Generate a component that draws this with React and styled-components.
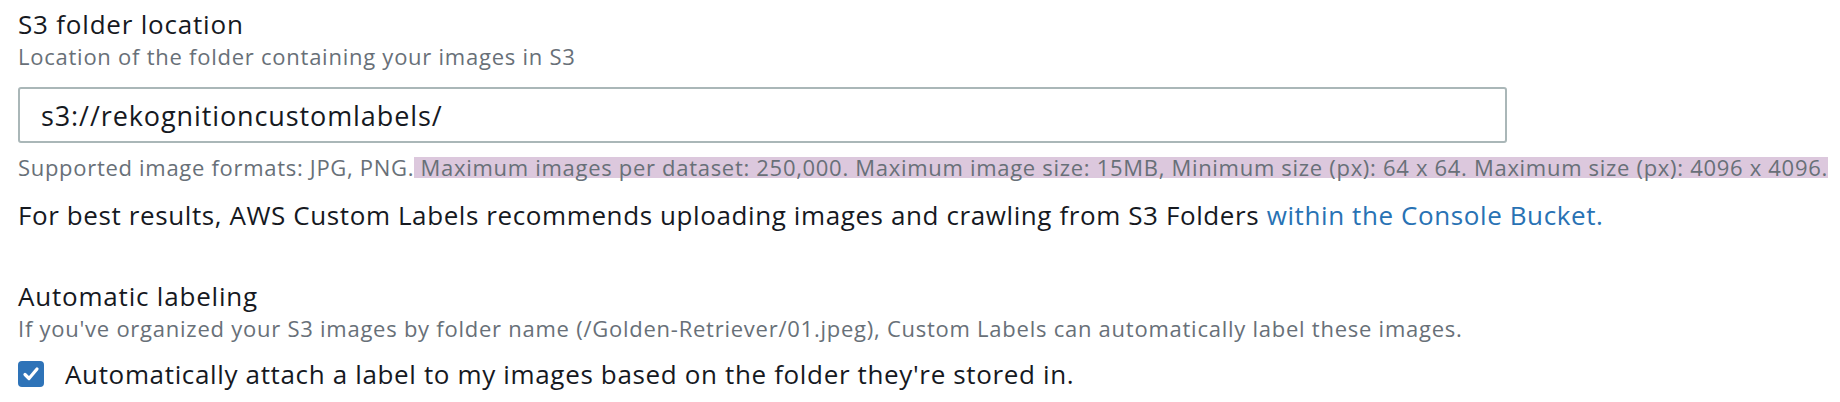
import React from 'react'
import styled, { createGlobalStyle } from 'styled-components'

const GlobalStyle = createGlobalStyle`
  body {
    margin: 0;
    background: #ffffff;
    font-family: "Open Sans", "Liberation Sans", sans-serif;
    color: #16191f;
  }
`

const Page = styled.div`
  padding: 7px 0 0 18px;
  width: 1840px;
  box-sizing: border-box;
`

const Field = styled.section`
  display: flex;
  flex-direction: column;
  margin-bottom: ${p => p.gap || 0}px;
`

const Label = styled.div`
  font-size: 26px;
  line-height: 34px;
  letter-spacing: 0.8px;
  color: #16191f;
`

const Description = styled.div`
  font-size: 22px;
  line-height: 30px;
  letter-spacing: 0.75px;
  color: #687078;
`

const Input = styled.input`
  margin-top: 16px;
  width: 1489px;
  height: 56px;
  box-sizing: border-box;
  border: 2px solid #aab7b8;
  border-radius: 3px;
  padding: 0 21px;
  font-family: inherit;
  font-size: 27px;
  letter-spacing: 0.9px;
  color: #16191f;
  outline: none;
  background: #fff;
`

const Constraint = styled.div`
  margin-top: 14px;
  font-size: 22px;
  line-height: 21px;
  letter-spacing: 0.7px;
  color: #687078;
  white-space: nowrap;
`

const Highlight = styled.span`
  display: inline-block;
  height: 21px;
  line-height: 21px;
  background: #dcc8dd;
`

const Note = styled.p`
  margin: 21px 0 0;
  font-size: 26px;
  line-height: 32px;
  letter-spacing: 0.6px;
  color: #16191f;
`

const Link = styled.a`
  color: #2872b4;
  text-decoration: none;
`

const CheckRow = styled.label`
  display: flex;
  align-items: center;
  gap: 21px;
  margin-top: 15px;
  font-size: 26px;
  line-height: 32px;
  letter-spacing: 0.65px;
  color: #16191f;
`

const Box = styled.span`
  width: 26px;
  height: 26px;
  border-radius: 4px;
  background: #2e73b8;
  display: flex;
  align-items: center;
  justify-content: center;
  flex-shrink: 0;
`

export default function App() {
  return (
    <>
      <GlobalStyle />
      <Page>
        <Field gap={48}>
          <Label>S3 folder location</Label>
          <Description>Location of the folder containing your images in S3</Description>
          <Input defaultValue="s3://rekognitioncustomlabels/" />
          <Constraint>
            Supported image formats: JPG, PNG.
            <Highlight>&nbsp;Maximum images per dataset: 250,000. Maximum image size: 15MB, Minimum size (px): 64 x 64. Maximum size (px): 4096 x 4096.</Highlight>
          </Constraint>
          <Note>
            For best results, AWS Custom Labels recommends uploading images and crawling from S3 Folders{' '}
            <Link href="#">within the Console Bucket.</Link>
          </Note>
        </Field>

        <Field>
          <Label>Automatic labeling</Label>
          <Description>If you've organized your S3 images by folder name (/Golden-Retriever/01.jpeg), Custom Labels can automatically label these images.</Description>
          <CheckRow>
            <Box>
              <svg width="20" height="20" viewBox="0 0 20 20">
                <path d="M4 10.5 L8 14.5 L16 5" fill="none" stroke="#fff" strokeWidth="3.2" strokeLinecap="round" strokeLinejoin="round" />
              </svg>
            </Box>
            Automatically attach a label to my images based on the folder they're stored in.
          </CheckRow>
        </Field>
      </Page>
    </>
  )
}
